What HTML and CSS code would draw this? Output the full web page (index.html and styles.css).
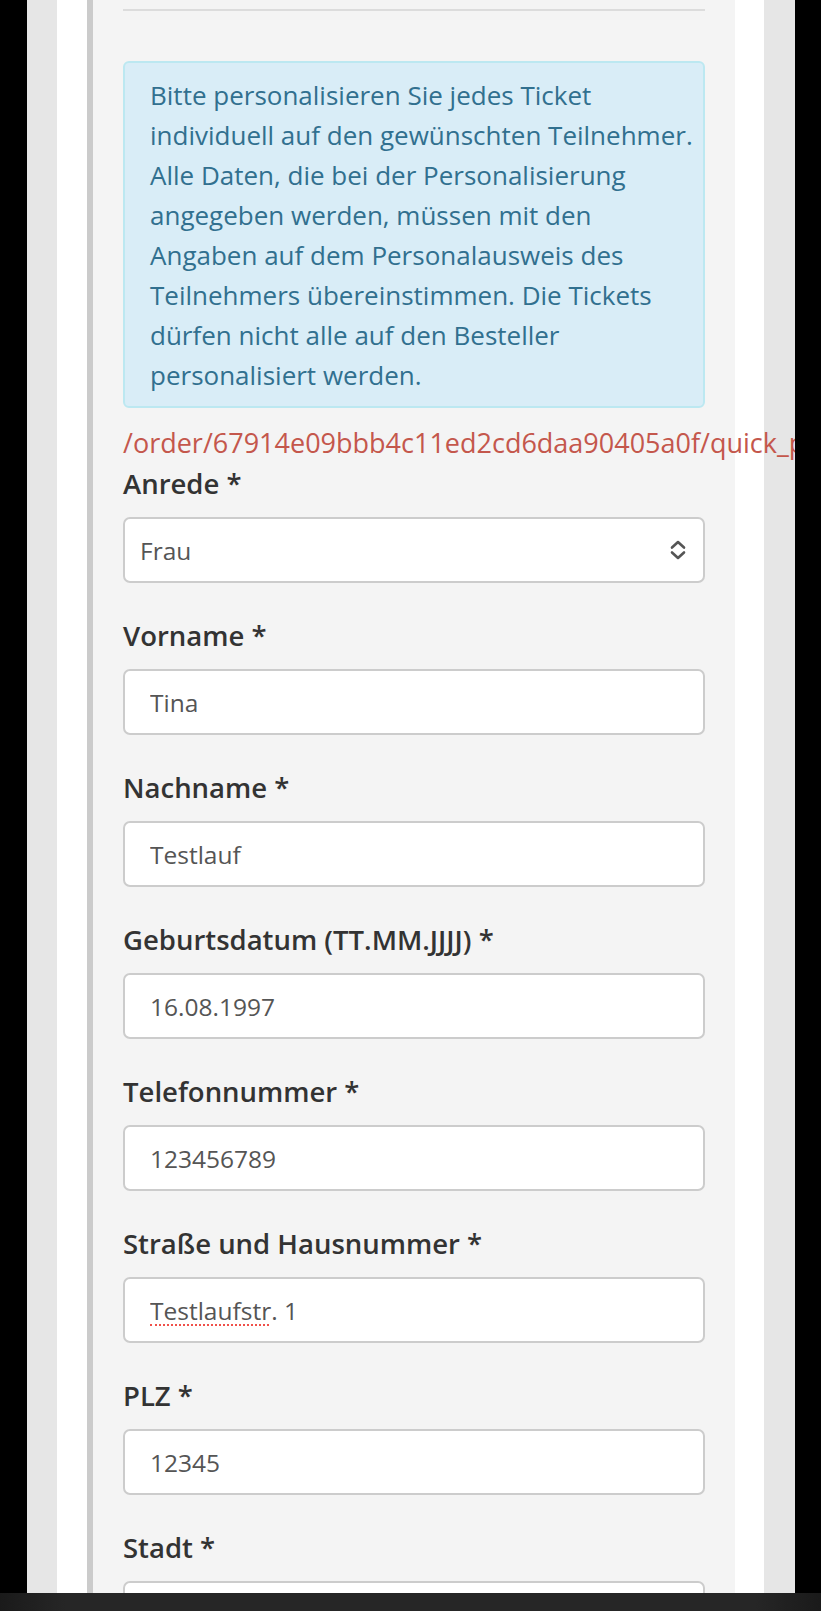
FILE: index.html
```html
<!DOCTYPE html>
<html lang="de">

<head>
    <meta charset="UTF-8">
    <meta name="viewport" content="width=device-width, initial-scale=1.0">
    <link rel="stylesheet" href="styles.css">
</head>

<body>
    <div class="frame">
        <div class="page">
            <div class="column">
                <div class="divider"></div>

                <div class="alert-info">
                    Bitte personalisieren Sie jedes Ticket<br>
                    individuell auf den gewünschten Teilnehmer.<br>
                    Alle Daten, die bei der Personalisierung<br>
                    angegeben werden, müssen mit den<br>
                    Angaben auf dem Personalausweis des<br>
                    Teilnehmers übereinstimmen. Die Tickets<br>
                    dürfen nicht alle auf den Besteller<br>
                    personalisiert werden.
                </div>

                <p class="debug-path">/order/67914e09bbb4c11ed2cd6daa90405a0f/quick_personalize</p>

                <form class="ticket-form">
                    <div class="form-group">
                        <label for="salutation">Anrede *</label>
                        <div class="select-wrap">
                            <select id="salutation" class="form-control">
                                <option>Frau</option>
                                <option>Herr</option>
                            </select>
                            <svg class="select-arrows" width="18" height="22" viewBox="0 0 18 22">
                                <path d="M3 8.5 L9 3 L15 8.5" fill="none" stroke="#555" stroke-width="2.6" stroke-linecap="round" stroke-linejoin="round" />
                                <path d="M3 13.5 L9 19 L15 13.5" fill="none" stroke="#555" stroke-width="2.6" stroke-linecap="round" stroke-linejoin="round" />
                            </svg>
                        </div>
                    </div>

                    <div class="form-group">
                        <label for="firstname">Vorname *</label>
                        <input type="text" id="firstname" class="form-control" value="Tina">
                    </div>

                    <div class="form-group">
                        <label for="lastname">Nachname *</label>
                        <input type="text" id="lastname" class="form-control" value="Testlauf">
                    </div>

                    <div class="form-group">
                        <label for="birthday">Geburtsdatum (TT.MM.JJJJ) *</label>
                        <input type="text" id="birthday" class="form-control" value="16.08.1997">
                    </div>

                    <div class="form-group">
                        <label for="phone">Telefonnummer *</label>
                        <input type="text" id="phone" class="form-control" value="123456789">
                    </div>

                    <div class="form-group">
                        <label for="street">Straße und Hausnummer *</label>
                        <div class="spell-wrap">
                            <input type="text" id="street" class="form-control" value="Testlaufstr. 1">
                            <span class="spell-mark"></span>
                        </div>
                    </div>

                    <div class="form-group">
                        <label for="zip">PLZ *</label>
                        <input type="text" id="zip" class="form-control" value="12345">
                    </div>

                    <div class="form-group">
                        <label for="city">Stadt *</label>
                        <input type="text" id="city" class="form-control" value="">
                    </div>
                </form>
            </div>
        </div>
    </div>

    <div class="bottom-bar"></div>
</body>

</html>
```

FILE: styles.css
```css
body {
    margin: 0;
    padding: 0;
    background: #000;
    font-family: "Open Sans", "Liberation Sans", sans-serif;
    overflow: hidden;
    height: 1611px;
}

.frame {
    margin: 0 26px 0 27px;
    background: #e6e6e6;
    padding: 0 31px 0 30px;
    overflow: hidden;
    height: 1611px;
}

.page {
    background: #fff;
    padding: 0 29px 0 30px;
    height: 100%;
}

.column {
    background: #f4f4f4;
    border-left: 6px solid #cbcbcb;
    padding: 0 30px;
    height: 100%;
}

.divider {
    padding-top: 9px;
    border-bottom: 2px solid #dcdcdc;
}

.alert-info {
    margin-top: 50px;
    background: #d9edf7;
    border: 2px solid #bce8f1;
    border-radius: 6px;
    color: #31708f;
    font-size: 26px;
    line-height: 40px;
    padding: 12px 8px 11px 25px;
    white-space: nowrap;
    overflow: hidden;
}

.debug-path {
    margin: 15px 0 0 0;
    color: #c4574c;
    font-size: 27px;
    line-height: 40px;
    white-space: nowrap;
}

.ticket-form {
    margin-top: 3px;
}

.form-group {
    margin-bottom: 35px;
}

.form-group label {
    display: block;
    color: #333;
    font-weight: 600;
    font-size: 27.5px;
    line-height: 36px;
    margin-bottom: 15px;
}

.form-control {
    display: block;
    box-sizing: border-box;
    width: 100%;
    height: 66px;
    background: #fff;
    border: 2px solid #cccccc;
    border-radius: 7px;
    color: #555;
    font-family: "Open Sans", "Liberation Sans", sans-serif;
    font-size: 24.5px;
    padding: 0 25px;
    margin: 0;
    outline: none;
}

select.form-control {
    appearance: none;
    -webkit-appearance: none;
    padding: 0 15px;
}

.select-wrap,
.spell-wrap {
    position: relative;
}

.select-arrows {
    position: absolute;
    right: 18px;
    top: 22px;
    pointer-events: none;
}

.spell-mark {
    position: absolute;
    left: 27px;
    top: 47px;
    width: 119px;
    border-bottom: 2px dotted #f0504a;
}

.bottom-bar {
    position: fixed;
    left: 0;
    right: 0;
    bottom: 0;
    height: 18px;
    background: linear-gradient(to right, #1a1a1a, #262626 8%, #262626 92%, #1a1a1a);
}
```
